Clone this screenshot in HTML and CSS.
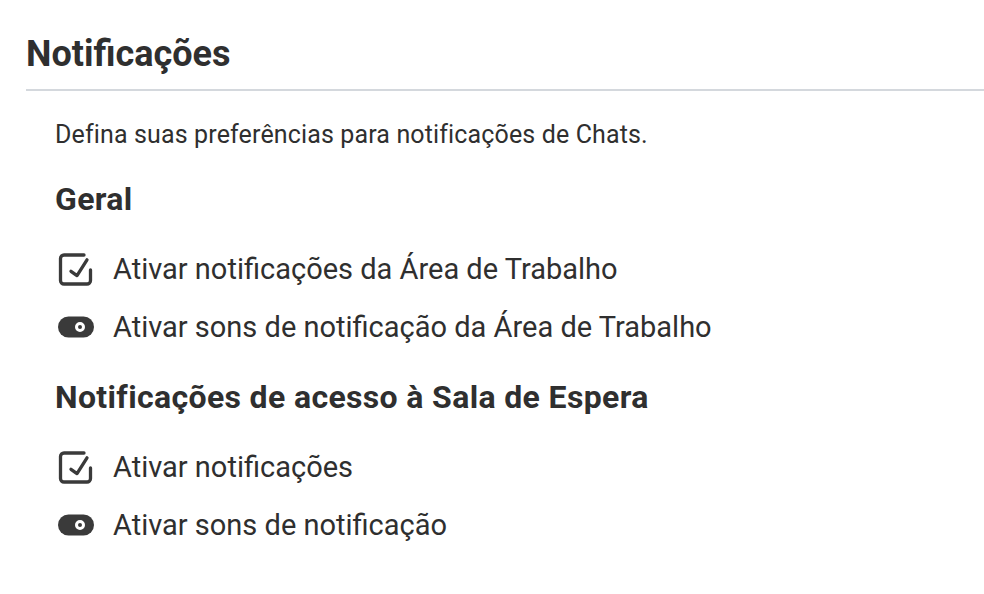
FILE: index.html
```html
<!DOCTYPE html>
<html lang="pt-BR">
<head>
    <meta charset="utf-8">
    <title>Notificações</title>
    <link rel="stylesheet" href="styles.css">
</head>
<body>
    <div class="panel">
        <div class="panel-header">
            <h1 class="panel-title">Notificações</h1>
        </div>
        <div class="panel-body">
            <p class="intro">Defina suas preferências para notificações de Chats.</p>

            <h2 class="group-title">Geral</h2>
            <ul class="options">
                <li class="option">
                    <svg class="icon" viewBox="0 0 40 40" aria-hidden="true">
                        <path class="stroke" d="M29 6H9a3.5 3.5 0 0 0-3.5 3.5v22a3.5 3.5 0 0 0 3.5 3.5h23a3.5 3.5 0 0 0 3.5-3.5V21"/>
                        <path class="stroke" d="M16 22.3l6 4.3L32 10.8"/>
                    </svg>
                    <span>Ativar notificações da Área de Trabalho</span>
                </li>
                <li class="option">
                    <svg class="icon" viewBox="0 0 40 40" aria-hidden="true">
                        <rect class="fill" x="3" y="9.5" width="36" height="21" rx="10.5"/>
                        <circle class="ring" cx="25" cy="20" r="3.5"/>
                    </svg>
                    <span>Ativar sons de notificação da Área de Trabalho</span>
                </li>
            </ul>

            <h2 class="group-title">Notificações de acesso à Sala de Espera</h2>
            <ul class="options">
                <li class="option">
                    <svg class="icon" viewBox="0 0 40 40" aria-hidden="true">
                        <path class="stroke" d="M29 6H9a3.5 3.5 0 0 0-3.5 3.5v22a3.5 3.5 0 0 0 3.5 3.5h23a3.5 3.5 0 0 0 3.5-3.5V21"/>
                        <path class="stroke" d="M16 22.3l6 4.3L32 10.8"/>
                    </svg>
                    <span>Ativar notificações</span>
                </li>
                <li class="option">
                    <svg class="icon" viewBox="0 0 40 40" aria-hidden="true">
                        <rect class="fill" x="3" y="9.5" width="36" height="21" rx="10.5"/>
                        <circle class="ring" cx="25" cy="20" r="3.5"/>
                    </svg>
                    <span>Ativar sons de notificação</span>
                </li>
            </ul>
        </div>
    </div>
</body>
</html>
```

FILE: styles.css
```css
body{
    margin: 0;
    background: #fff;
    color: #2f2f2f;
    font-family: Roboto, "Liberation Sans", sans-serif;
}

.panel{
    padding-left: 26px;
}

.panel-header{
    padding-top: 32px;
    padding-bottom: 13px;
    border-bottom: 2px solid #d4d8dd;
}
.panel-title{
    margin: 0;
    font-size: 36px;
    line-height: 44px;
    font-weight: 700;
}

.panel-body{
    padding-left: 29px;
    padding-top: 28px;
}

.intro{
    margin: 0;
    font-size: 25px;
    line-height: 32px;
    letter-spacing: 0.14px;
}

.group-title{
    margin: 28px 0 0;
    font-size: 32px;
    line-height: 40px;
    font-weight: 700;
    letter-spacing: 0.35px;
}
.options + .group-title{
    margin-top: 21px;
}

.options{
    list-style: none;
    margin: 21px 0 0;
    padding: 0;
}
.option{
    display: flex;
    align-items: center;
    gap: 18px;
    height: 58px;
    font-size: 29px;
}

.icon{
    width: 40px;
    height: 40px;
    flex: none;
}
.icon .stroke{
    fill: none;
    stroke: #3a3a3a;
    stroke-width: 3.3;
    stroke-linecap: round;
    stroke-linejoin: round;
}
.icon .fill{
    fill: #3a3a3a;
}
.icon .ring{
    fill: #3a3a3a;
    stroke: #fff;
    stroke-width: 3;
}
```
